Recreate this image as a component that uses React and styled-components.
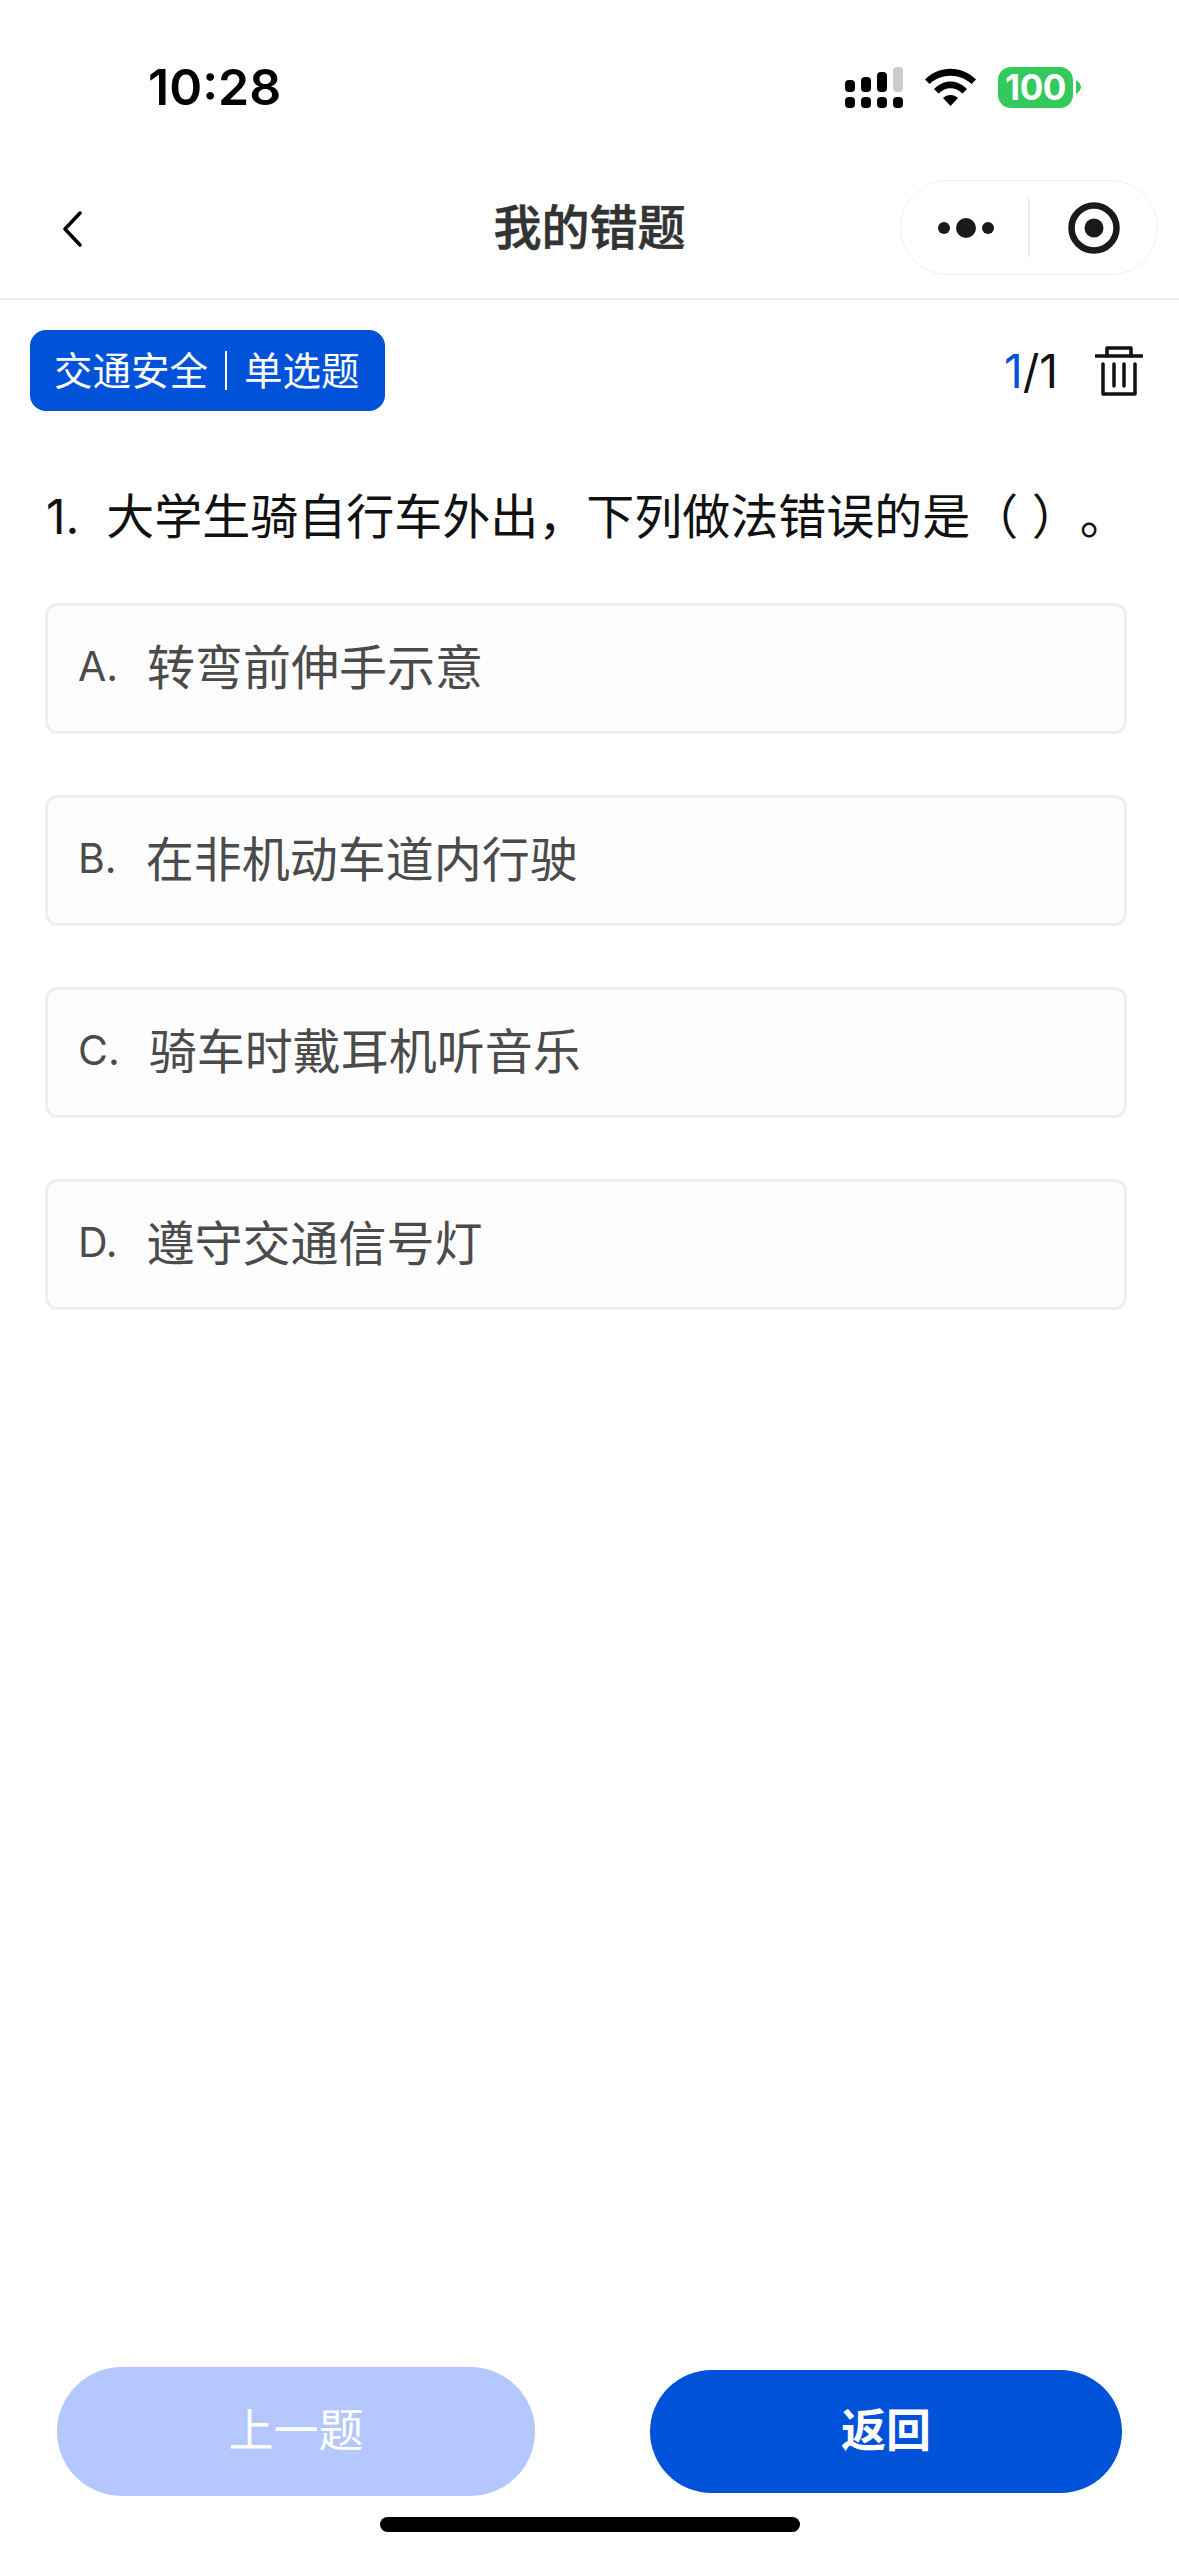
import React from 'react';
import styled, {createGlobalStyle} from 'styled-components';

const Global = createGlobalStyle`
  html, body {
    margin: 0;
    padding: 0;
    background: #fff;
  }
  body {
    font-family: Inter, "Noto Sans CJK SC", sans-serif;
    text-spacing-trim: space-all;
  }
`

const Page = styled.div`
  width: 1179px;
  height: 2556px;
  display: flex;
  flex-direction: column;
  background: #fff;
  overflow: hidden;
`
const StatusBar = styled.div`
  height: 180px;
  flex: none;
  box-sizing: border-box;
  padding: 67px 98px 0 148px;
  display: flex;
  justify-content: space-between;
  align-items: flex-start;
`
const Time = styled.div`
  font-size: 50px;
  line-height: 41px;
  font-weight: 600;
  color: #000;
`
const StatusIcons = styled.div`
  display: flex;
  align-items: flex-start;
`
const Signal = styled.svg`
  width: 58px;
  height: 41px;
  display: block;
`
const Wifi = styled.svg`
  width: 51px;
  height: 38px;
  margin: 1px 22px 0;
  display: block;
`
const Battery = styled.div`
  width: 75px;
  height: 41px;
  border-radius: 13px;
  background: #34c95c;
  color: #fff;
  font-size: 35px;
  line-height: 41px;
  font-weight: 700;
  text-align: center;
  letter-spacing: -0.5px;
`
const BatteryCap = styled.svg`
  width: 5px;
  height: 14px;
  margin: 13px 0 0 3px;
  display: block;
`
const NavBar = styled.div`
  height: 120px;
  flex: none;
  box-sizing: border-box;
  padding: 0 21px 24px;
  border-bottom: 2px solid #ececec;
  display: grid;
  grid-template-columns: 1fr auto 1fr;
  align-items: center;
`
const BackIcon = styled.svg`
  width: 20px;
  height: 36px;
  margin: 2px 0 0 41px;
  display: block;
`
const Title = styled.div`
  font-size: 48px;
  line-height: 60px;
  font-weight: 500;
  color: #333;
  -webkit-text-stroke: 0.6px #333;
`
const Capsule = styled.div`
  justify-self: end;
  width: 258px;
  height: 95px;
  box-sizing: border-box;
  border: 1.5px solid #f0f0f0;
  border-radius: 48px;
  display: flex;
  align-items: center;
`
const CapsuleHalf = styled.div`
  flex: 1;
  padding-left: 2px;
  display: flex;
  justify-content: center;
  align-items: center;
`
const CapsuleDivider = styled.div`
  width: 1.5px;
  height: 59px;
  background: #ededed;
`
const MetaRow = styled.div`
  margin-top: 30px;
  padding: 0 36px 0 30px;
  display: flex;
  justify-content: space-between;
  align-items: center;
`
const Tag = styled.div`
  height: 81px;
  box-sizing: border-box;
  padding: 0 25px 6px 24px;
  border-radius: 16px;
  background: #0052d9;
  color: #fff;
  font-size: 38.5px;
  display: flex;
  align-items: center;
  gap: 17px;
`
const TagDivider = styled.span`
  width: 2px;
  height: 39px;
  margin-top: 6px;
  background: #fff;
`
const MetaRight = styled.div`
  display: flex;
  align-items: center;
  gap: 37px;
`
const Counter = styled.div`
  font-size: 46px;
  line-height: 56px;
  color: #111;
`
const CounterCurrent = styled.span`
  color: #0052d9;
`
const TrashIcon = styled.svg`
  width: 48px;
  height: 50px;
  display: block;
`
const Question = styled.div`
  margin: 75px 0 55px;
  padding-left: 46px;
  display: flex;
  gap: 27px;
  font-size: 48px;
  line-height: 62px;
  color: #111;
`
const Options = styled.div`
  padding: 0 52px 0 45px;
  display: flex;
  flex-direction: column;
  gap: 61px;
`
const Option = styled.div`
  height: 131px;
  box-sizing: border-box;
  padding: 0 0 9px 30px;
  border: 3px solid #eeeeee;
  border-radius: 12px;
  background: #fdfdfd;
  display: flex;
  align-items: center;
  gap: 29px;
  color: #4b4b4b;
  font-size: 48px;
`
const OptionKey = styled.span`
  margin-top: 4px;
  font-size: 41px;
`
const Spacer = styled.div`
  flex: 1;
`
const Footer = styled.div`
  height: 129px;
  flex: none;
  box-sizing: border-box;
  padding: 0 57px;
  display: flex;
  justify-content: space-between;
  align-items: center;
`
const FooterButton = styled.div`
  width: ${p => p.$muted ? 478 : 472}px;
  height: ${p => p.$muted ? 129 : 123}px;
  box-sizing: border-box;
  padding-bottom: 8px;
  border-radius: 65px;
  background: ${p => p.$muted ? '#b5c7ff' : '#0052d9'};
  color: #fff;
  font-size: 45px;
  font-weight: ${p => p.$muted ? 400 : 700};
  display: flex;
  justify-content: center;
  align-items: center;
`
const HomeRow = styled.div`
  height: 60px;
  flex: none;
  display: flex;
  justify-content: center;
  padding-top: 21px;
  box-sizing: border-box;
`
const HomeBar = styled.div`
  width: 420px;
  height: 15px;
  border-radius: 8px;
  background: #000;
`

const options = [
  {key: 'A.', text: '转弯前伸手示意'},
  {key: 'B.', text: '在非机动车道内行驶'},
  {key: 'C.', text: '骑车时戴耳机听音乐'},
  {key: 'D.', text: '遵守交通信号灯'},
];

function App() {
  return (
    <Page>
      <Global />
      <StatusBar>
        <Time>10:28</Time>
        <StatusIcons>
          <Signal viewBox="0 0 58 41">
            <rect x="0" y="13" width="10" height="12" rx="4" fill="#000" />
            <rect x="16" y="10" width="10" height="15" rx="4" fill="#000" />
            <rect x="32" y="5" width="10" height="20" rx="4" fill="#000" />
            <rect x="48" y="0" width="10" height="25" rx="4" fill="#ccc" />
            <rect x="0" y="30" width="10" height="11" rx="4" fill="#000" />
            <rect x="16" y="30" width="10" height="11" rx="4" fill="#000" />
            <rect x="32" y="30" width="10" height="11" rx="4" fill="#000" />
            <rect x="48" y="30" width="10" height="11" rx="4" fill="#000" />
          </Signal>
          <Wifi viewBox="0 0 51 38">
            <path d="M0 11.5C14-3 37-3 51 11.5L46.5 16C35 5 16 5 4.5 16Z" fill="#000" />
            <path d="M9 21C19 11 32 11 42 21L37.5 25.5C30 18.5 21 18.5 13.5 25.5Z" fill="#000" />
            <path d="M18 30C22 26 29 26 33 30L25.5 38Z" fill="#000" />
          </Wifi>
          <Battery>100</Battery>
          <BatteryCap viewBox="0 0 5 14">
            <path d="M0 0C3 2 5 4.500 5 7C5 9.500 3 12 0 14Z" fill="#34c95c" />
          </BatteryCap>
        </StatusIcons>
      </StatusBar>

      <NavBar>
        <BackIcon viewBox="0 0 20 36">
          <path d="M18 2L3 18L18 34" fill="none" stroke="#000" strokeWidth="3.500" strokeLinecap="round" strokeLinejoin="round" />
        </BackIcon>
        <Title>我的错题</Title>
        <Capsule>
          <CapsuleHalf>
            <svg width="56" height="22" viewBox="0 0 56 22">
              <circle cx="6" cy="11" r="6" fill="#1a1a1a" />
              <circle cx="28" cy="11" r="10" fill="#1a1a1a" />
              <circle cx="50" cy="11" r="6" fill="#1a1a1a" />
            </svg>
          </CapsuleHalf>
          <CapsuleDivider />
          <CapsuleHalf>
            <svg width="52" height="52" viewBox="0 0 52 52">
              <circle cx="26" cy="26" r="22.500" fill="none" stroke="#1a1a1a" strokeWidth="6.500" />
              <circle cx="26" cy="26" r="9.500" fill="#1a1a1a" />
            </svg>
          </CapsuleHalf>
        </Capsule>
      </NavBar>

      <MetaRow>
        <Tag>
          <span>交通安全</span>
          <TagDivider />
          <span>单选题</span>
        </Tag>
        <MetaRight>
          <Counter><CounterCurrent>1</CounterCurrent>/1</Counter>
          <TrashIcon viewBox="0 0 48 50">
            <g fill="none" stroke="#111" strokeWidth="3.500" strokeLinecap="round" strokeLinejoin="round">
              <path d="M1 10H47" />
              <path d="M12 10V2H36V10" />
              <path d="M8 18V48H40V18" />
              <path d="M19 18V40M29 18V40" />
            </g>
          </TrashIcon>
        </MetaRight>
      </MetaRow>

      <Question>
        <span>1.</span>
        <span>大学生骑自行车外出，下列做法错误的是（ ）。</span>
      </Question>

      <Options>
        {options.map(o => (
          <Option key={o.key}>
            <OptionKey>{o.key}</OptionKey>
            <span>{o.text}</span>
          </Option>
        ))}
      </Options>

      <Spacer />
      <Footer>
        <FooterButton $muted>上一题</FooterButton>
        <FooterButton>返回</FooterButton>
      </Footer>
      <HomeRow>
        <HomeBar />
      </HomeRow>
    </Page>
  );
}

export default App;
